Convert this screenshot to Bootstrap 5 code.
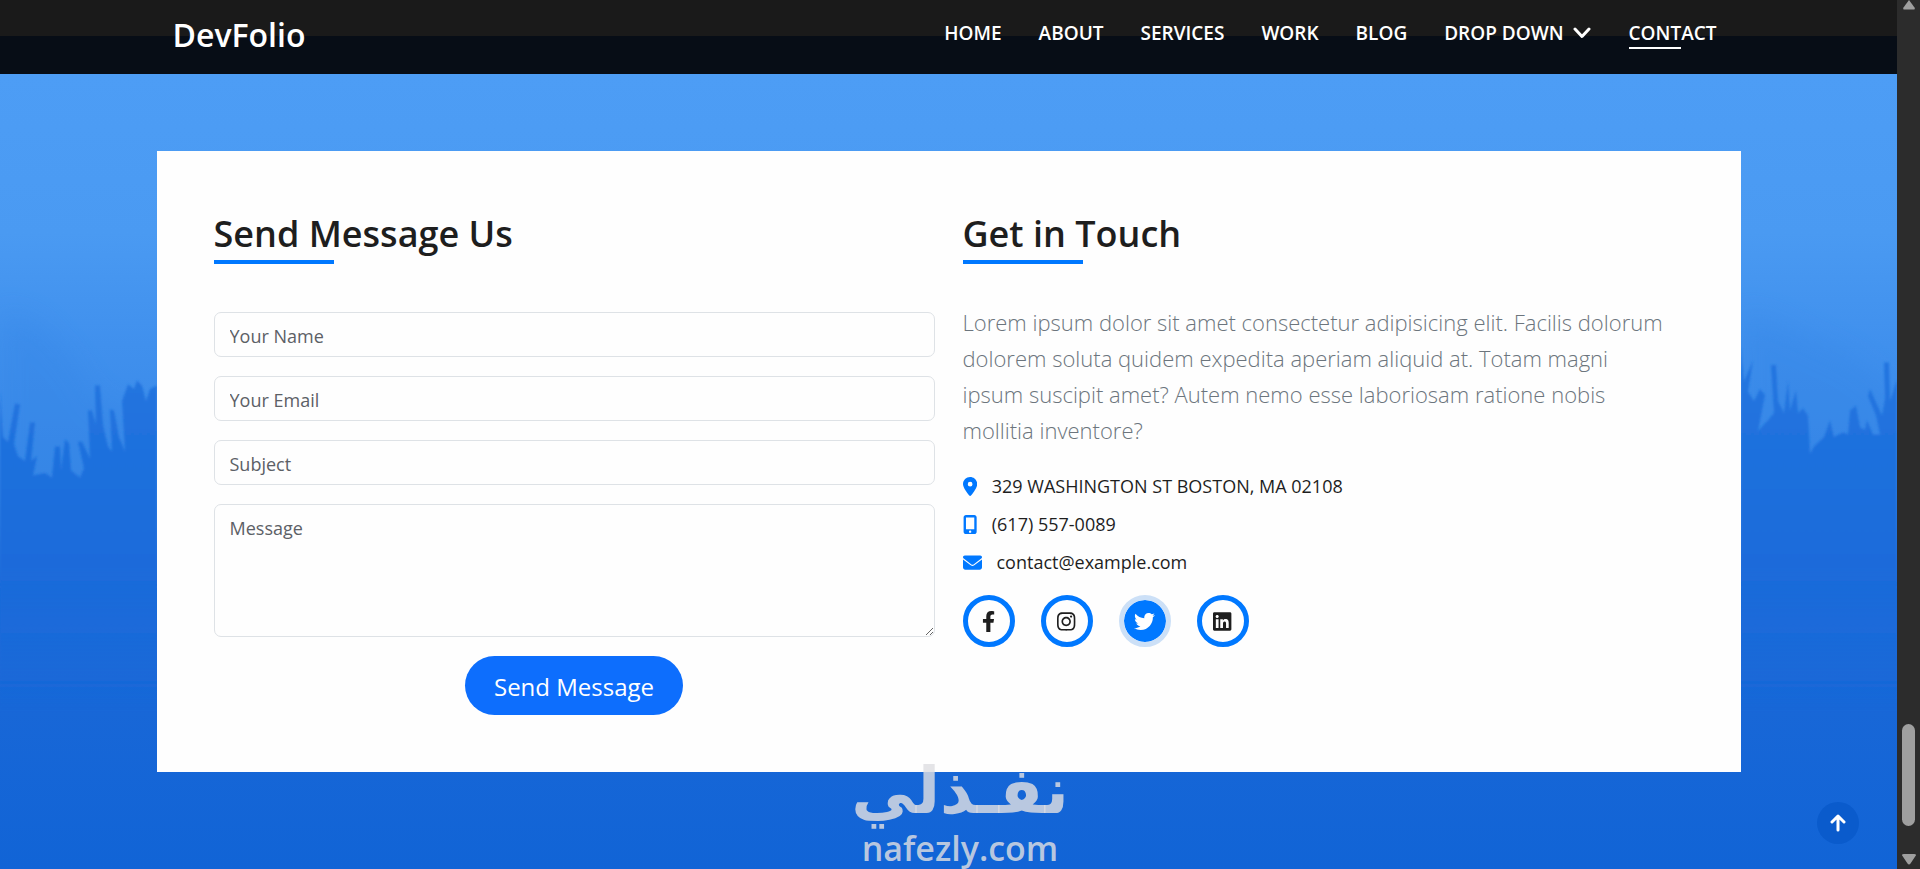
<!DOCTYPE html>
<html lang="en">
<head>
<meta charset="utf-8">
<meta name="viewport" content="width=device-width, initial-scale=1">
<title>DevFolio - Contact</title>
<link href="https://cdn.jsdelivr.net/npm/bootstrap@5.3.0/dist/css/bootstrap.min.css" rel="stylesheet">
<style>
  :root { --brand: #0078ff; --ink: #1e1e1e; }
  body { font-family: "Open Sans", "Noto Sans", sans-serif; font-size: 18px; color: var(--ink); }
  .page-wrap { min-height: 100vh; }
  .wide { max-width: 1584px; margin: 0 auto; width: 100%; }

  .site-nav { height: 74px; padding: 0; background: linear-gradient(#1a1a1a 36px, #070d16 36px); }
  .site-nav .navbar-brand { font-size: 32px; line-height: 40px; font-weight: 600; color: #fff; padding: 0; margin: 0 0 4px; }
  .site-nav .navbar-nav { gap: 37px; margin-bottom: 9px; }
  .site-nav .nav-link { position: relative; padding: 0; font-size: 19px; line-height: 28px; font-weight: 600; color: #fff; }
  .site-nav .nav-link.active { color: #fff; }
  .site-nav .nav-link.active::after { content: ""; position: absolute; left: 0; bottom: -2px; width: 60%; height: 2px; background: #fff; }

  .contact-area { background: linear-gradient(#4d9df5 0, #4a9af2 20%, #4090ed 34%, #3888e8 50%, #3080e3 56%, #1b6bda 64%, #1867d7 80%, #1164d6 100%); padding: 77px 24px 97px; }
  .backdrop { position: absolute; inset: 0; width: 100%; height: 100%; }
  .panel { background: #fefefe; padding: 57px; }
  .panel > .row { --bs-gutter-x: 28px; }
  .section-title { font-size: 36px; line-height: 52px; font-weight: 600; padding-bottom: 4px; margin-bottom: 40px; position: relative; }
  .section-title::after { content: ""; position: absolute; left: 0; bottom: 0; width: 120px; height: 4px; background: var(--brand); }
  .message-form { gap: 19px; }
  .panel .form-control { font-size: 18px; line-height: 27px; padding: 10px 15px 6px; border-radius: 7px; border-color: #dee2e6; background: transparent; }
  .panel .form-control::placeholder { color: #5c6066; }
  .panel textarea.form-control { height: 133px; }
  .send-btn { font-size: 24px; line-height: 36px; padding: 13px 29px 10px; background: #0d6efd; }
  .intro { font-size: 22px; line-height: 36px; font-weight: 300; color: #6c757d; margin-bottom: 24px; }
  .facts { gap: 10px; margin-bottom: 19px; }
  .facts li { line-height: 28px; font-size: 18px; }
  .facts svg { height: 19px; fill: var(--brand); margin-right: 15px; }
  .social { gap: 26px; }
  .social a { width: 52px; height: 52px; border: 5px solid var(--brand); color: var(--ink); }
  .social a.is-hover { background: var(--brand); background-clip: padding-box; border-color: #cce0f7; color: #fff; }
  .social svg { height: 21px; fill: currentColor; }

  .to-top { position: absolute; right: 38px; bottom: 25px; width: 42px; height: 42px; background: #0a5bcc; border: 0; }
  .stamp { position: absolute; left: 0; right: 0; bottom: 0; color: rgba(222, 222, 226, .82); pointer-events: none; }
  .stamp-ar { font: 700 64px/72px "DejaVu Sans", sans-serif; }
  .stamp-en { font: 600 34px/42px "Open Sans", sans-serif; }

  .scroll-rail { width: 23px; background: #2c2c2c; flex: none; }
  .scroll-rail svg { width: 14px; height: 11px; fill: #9f9f9f; }
  .rail-thumb { width: 13px; height: 102px; border-radius: 7px; background: #9f9f9f; margin: auto 0 28px; }
</style>
</head>
<body>
<div class="page-wrap d-flex position-relative">
  <div class="flex-grow-1 d-flex flex-column">
    <nav class="navbar site-nav" aria-label="Main">
      <div class="wide d-flex align-items-center justify-content-between ps-3 pe-4">
        <a class="navbar-brand" href="#">DevFolio</a>
        <ul class="navbar-nav flex-row">
          <li class="nav-item"><a class="nav-link" href="#">HOME</a></li>
          <li class="nav-item"><a class="nav-link" href="#">ABOUT</a></li>
          <li class="nav-item"><a class="nav-link" href="#">SERVICES</a></li>
          <li class="nav-item"><a class="nav-link" href="#">WORK</a></li>
          <li class="nav-item"><a class="nav-link" href="#">BLOG</a></li>
          <li class="nav-item"><a class="nav-link d-flex align-items-center gap-2" href="#">DROP DOWN
            <svg width="20" height="12" viewBox="0 0 20 12" fill="none" stroke="#fff" stroke-width="3" stroke-linecap="round" stroke-linejoin="round" aria-hidden="true"><path d="M3 2l7 7.500L17 2"/></svg></a></li>
          <li class="nav-item"><a class="nav-link active" aria-current="page" href="#">CONTACT</a></li>
        </ul>
      </div>
    </nav>

    <main class="contact-area flex-grow-1 position-relative">
      <!-- crowd with raised hands behind the panel -->
      <svg class="backdrop" viewBox="0 0 1897 795" preserveAspectRatio="none" aria-hidden="true">
        <defs>
          <linearGradient id="crowd" x1="0" y1="260" x2="0" y2="560" gradientUnits="userSpaceOnUse">
            <stop offset="0" stop-color="#2576e0"/><stop offset=".3" stop-color="#1e70dd"/><stop offset=".6" stop-color="#1b6bda"/><stop offset="1" stop-color="#1a6ad9" stop-opacity="0"/>
          </linearGradient>
          <filter id="soft" x="-5%" y="-5%" width="110%" height="110%"><feGaussianBlur stdDeviation="1"/></filter>
          <filter id="haze" x="-20%" y="-20%" width="140%" height="140%"><feGaussianBlur stdDeviation="12"/></filter>
        </defs>
        <g transform="translate(0 -33) scale(1 1.2)">
          <g filter="url(#haze)" fill="#3183e4" opacity=".3">
            <path d="M0 225L40 235 70 262 100 300 160 320V400H0z"/>
            <path d="M1741 225L1780 235 1850 262 1897 290V380H1741z"/>
          </g>
          <g fill="url(#crowd)" filter="url(#soft)">
            <path d="M0 292L3 330 8 334 15 302 20 303 14 336 18 346 25 350 30 318 35 318 31 350 37 346 33 362 45 360 52 364 55 338 60 338 61 358 65 332 69 335 71 358 80 364 84 356 78 334 82 334 90 348 88 308 92 308 96 320 95 287 100 287 103 320 108 338 112 342 110 307 114 308 119 330 125 342 122 300 128 286 134 290 137 283 142 287 146 300 150 290 157 287V600H0z"/>
            <path d="M1741 255L1744 284 1753 266 1748 292 1754 300 1760 290 1765 295 1758 325 1768 316 1774 310 1771 270 1776 270 1778 300 1784 310 1788 283 1790 308 1796 291 1798 310 1803 306 1808 312 1810 344 1814 338 1824 330 1830 316 1834 330 1843 326 1848 328 1850 308 1856 304 1860 322 1865 324 1867 316 1873 328 1880 328 1876 312 1868 296 1870 290 1882 312 1885 298 1884 268 1889 268 1890 300 1897 282V600H1741z"/>
          </g>
        </g>
      </svg>

      <section class="wide panel position-relative">
        <div class="row">
          <div class="col-6">
            <h1 class="section-title">Send Message Us</h1>
            <form class="message-form d-grid pt-2">
              <input class="form-control" type="text" aria-label="Your Name" placeholder="Your Name">
              <input class="form-control" type="email" aria-label="Your Email" placeholder="Your Email">
              <input class="form-control" type="text" aria-label="Subject" placeholder="Subject">
              <textarea class="form-control" aria-label="Message" placeholder="Message"></textarea>
              <button class="btn btn-primary rounded-pill border-0 send-btn mx-auto" type="submit">Send Message</button>
            </form>
          </div>
          <div class="col-6">
            <h2 class="section-title">Get in Touch</h2>
            <p class="intro pe-3">Lorem ipsum dolor sit amet consectetur adipisicing elit. Facilis dolorum dolorem soluta quidem expedita aperiam aliquid at. Totam magni ipsum suscipit amet? Autem nemo esse laboriosam ratione nobis mollitia inventore?</p>
            <ul class="facts list-unstyled d-flex flex-column">
              <li class="d-flex align-items-center"><svg viewBox="0 0 384 512" aria-hidden="true"><path d="M215.700 499.200C267 435 384 279.400 384 192C384 86 298 0 192 0S0 86 0 192c0 87.400 117 243 168.300 307.200c12.300 15.300 35.100 15.300 47.400 0zM192 128a64 64 0 1 1 0 128 64 64 0 1 1 0-128z"/></svg>329 WASHINGTON ST BOSTON, MA 02108</li>
              <li class="d-flex align-items-center"><svg viewBox="0 0 384 512" aria-hidden="true"><path d="M16 64C16 28.700 44.700 0 80 0H304c35.300 0 64 28.700 64 64V448c0 35.300-28.700 64-64 64H80c-35.300 0-64-28.700-64-64V64zM224 448a32 32 0 1 0-64 0 32 32 0 1 0 64 0zM304 64H80V384H304V64z"/></svg>(617) 557-0089</li>
              <li class="d-flex align-items-center"><svg viewBox="0 0 512 512" aria-hidden="true"><path d="M48 64C21.500 64 0 85.500 0 112c0 15.100 7.100 29.300 19.200 38.400L236.800 313.600c11.400 8.500 27 8.500 38.400 0L492.800 150.400c12.100-9.100 19.200-23.300 19.200-38.400c0-26.500-21.500-48-48-48H48zM0 176V384c0 35.300 28.700 64 64 64H448c35.300 0 64-28.700 64-64V176L294.400 339.200c-22.800 17.100-54 17.100-76.800 0L0 176z"/></svg>contact@example.com</li>
            </ul>
            <div class="social d-flex">
              <a class="rounded-circle d-flex align-items-center justify-content-center" href="#" aria-label="Facebook"><svg viewBox="0 0 320 512"><path d="M279.140 288l14.220-92.660h-88.910v-60.130c0-25.350 12.420-50.060 52.240-50.060h40.420V6.260S260.430 0 225.360 0c-73.220 0-121.080 44.380-121.080 124.720v70.620H22.890V288h81.390v224h100.170V288z"/></svg></a>
              <a class="rounded-circle d-flex align-items-center justify-content-center" href="#" aria-label="Instagram"><svg viewBox="0 0 448 512"><path d="M224.100 141c-63.600 0-114.900 51.300-114.900 114.900s51.300 114.900 114.900 114.900S339 319.500 339 255.900 287.700 141 224.100 141zm0 189.600c-41.100 0-74.700-33.500-74.700-74.700s33.500-74.700 74.700-74.700 74.700 33.500 74.700 74.700-33.600 74.700-74.700 74.700zm146.400-194.300c0 14.900-12 26.800-26.800 26.800-14.900 0-26.800-12-26.800-26.800s12-26.800 26.800-26.800 26.800 12 26.800 26.800zm76.100 27.200c-1.700-35.900-9.900-67.700-36.200-93.900-26.200-26.200-58-34.400-93.900-36.200-37-2.100-147.900-2.100-184.900 0-35.800 1.700-67.600 9.900-93.900 36.100s-34.400 58-36.200 93.900c-2.100 37-2.100 147.900 0 184.900 1.700 35.900 9.900 67.700 36.200 93.900s58 34.400 93.900 36.200c37 2.100 147.900 2.100 184.900 0 35.900-1.700 67.700-9.900 93.900-36.200 26.200-26.200 34.400-58 36.200-93.900 2.100-37 2.100-147.800 0-184.800zM398.800 388c-7.800 19.600-22.900 34.700-42.600 42.600-29.500 11.700-99.500 9-132.100 9s-102.700 2.600-132.100-9c-19.600-7.800-34.700-22.900-42.600-42.600-11.700-29.500-9-99.500-9-132.100s-2.600-102.700 9-132.100c7.800-19.600 22.900-34.700 42.600-42.600 29.500-11.700 99.500-9 132.100-9s102.700-2.600 132.100 9c19.600 7.800 34.700 22.900 42.600 42.600 11.700 29.500 9 99.500 9 132.100s2.700 102.700-9 132.100z"/></svg></a>
              <a class="rounded-circle d-flex align-items-center justify-content-center is-hover" href="#" aria-label="Twitter"><svg viewBox="0 0 512 512"><path d="M459.370 151.716c.325 4.548.325 9.097.325 13.645 0 138.720-105.583 298.558-298.558 298.558-59.452 0-114.680-17.219-161.137-47.106 8.447.974 16.568 1.299 25.340 1.299 49.055 0 94.213-16.568 130.274-44.832-46.132-.975-84.792-31.188-98.112-72.772 6.498.974 12.995 1.624 19.818 1.624 9.421 0 18.843-1.300 27.614-3.573-48.081-9.747-84.143-51.980-84.143-102.985v-1.299c13.969 7.797 30.214 12.670 47.431 13.319-28.264-18.843-46.781-51.005-46.781-87.391 0-19.492 5.197-37.360 14.294-52.954 51.655 63.675 129.300 105.258 216.365 109.807-1.624-7.797-2.599-15.918-2.599-24.040 0-57.828 46.782-104.934 104.934-104.934 30.213 0 57.502 12.670 76.670 33.137 23.715-4.548 46.456-13.320 66.599-25.340-7.798 24.366-24.366 44.833-46.132 57.827 21.117-2.273 41.584-8.122 60.426-16.243-14.292 20.791-32.161 39.308-52.628 54.253z"/></svg></a>
              <a class="rounded-circle d-flex align-items-center justify-content-center" href="#" aria-label="LinkedIn"><svg viewBox="0 0 448 512"><path d="M416 32H31.900C14.300 32 0 46.500 0 64.300v383.400C0 465.500 14.300 480 31.900 480H416c17.600 0 32-14.500 32-32.300V64.300c0-17.800-14.400-32.300-32-32.300zM135.400 416H69V202.200h66.500V416zm-33.200-243c-21.300 0-38.500-17.300-38.500-38.500S80.900 96 102.200 96c21.200 0 38.500 17.300 38.500 38.500 0 21.300-17.200 38.500-38.500 38.500zm282.100 243h-66.400V312c0-24.800-.5-56.700-34.500-56.700-34.600 0-39.900 27-39.900 54.900V416h-66.400V202.200h63.700v29.200h.9c8.900-16.800 30.600-34.500 62.200-34.500 66.500 0 78.800 43.800 78.800 100.900V416z"/></svg></a>
            </div>
          </div>
        </div>
      </section>

      <button class="to-top rounded-circle d-flex align-items-center justify-content-center p-0" type="button" aria-label="Back to top">
        <svg width="18" height="18" viewBox="0 0 18 18" fill="none" stroke="#fff" stroke-width="3" stroke-linecap="round" stroke-linejoin="round"><path d="M9 16V2M3 8l6-6 6 6"/></svg>
      </button>
    </main>
  </div>

  <div class="scroll-rail d-flex flex-column align-items-center" aria-hidden="true">
    <svg viewBox="0 0 14 11"><path d="M7 0l5.500 7.500q1 2-1 2h-9q-2 0-1-2z"/></svg>
    <div class="rail-thumb"></div>
    <svg class="mb-1" viewBox="0 0 14 11"><path d="M2 0h10q3 0 1.500 2L8.500 9.500q-1.500 2-3 0L.5 2Q-1 0 2 0z"/></svg>
  </div>

  <div class="stamp text-center">
    <div class="stamp-ar" lang="ar" dir="rtl">نفـذلي</div>
    <div class="stamp-en">nafezly.com</div>
  </div>
</div>
<script src="https://cdn.jsdelivr.net/npm/bootstrap@5.3.0/dist/js/bootstrap.bundle.min.js"></script>
</body>
</html>
